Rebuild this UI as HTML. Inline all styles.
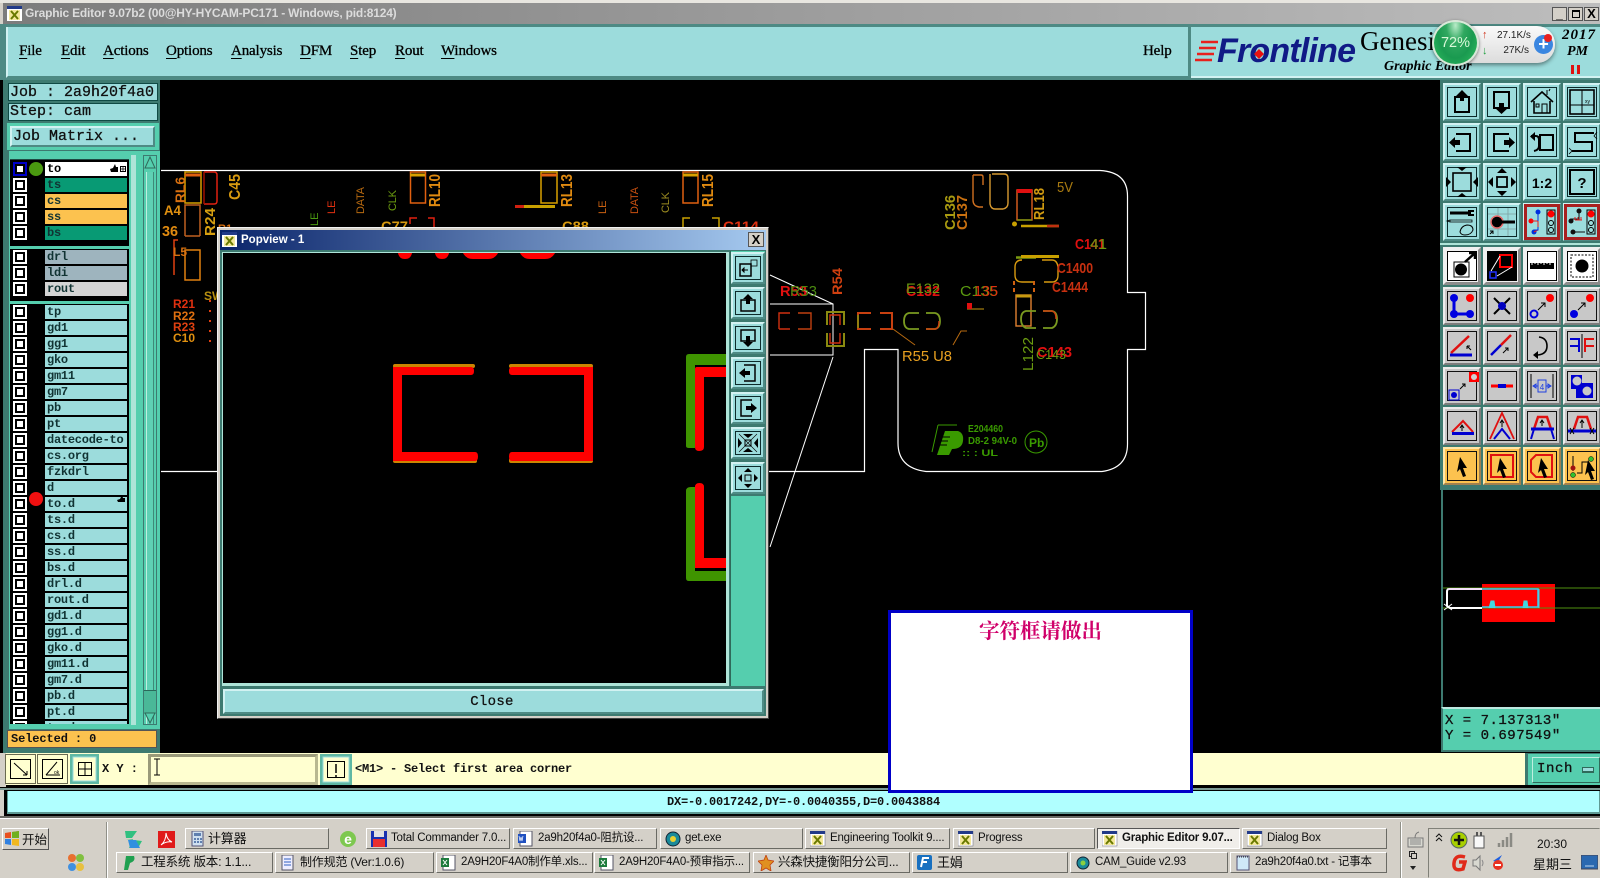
<!DOCTYPE html>
<html><head><meta charset="utf-8"><title>Graphic Editor</title>
<style>
html,body{margin:0;padding:0;width:1600px;height:878px;overflow:hidden;background:#d4d0c8;}
*{box-sizing:border-box}
.a{position:absolute}
body{font-family:"Liberation Sans","Noto Sans CJK SC",sans-serif;}
.m{font-family:"Liberation Mono","Noto Sans CJK SC",monospace;font-weight:bold;color:#111;white-space:pre}
.menu{position:absolute;top:41px;font:15px/20px "Liberation Serif",serif;color:#000;-webkit-text-stroke:.3px #000;letter-spacing:-.15px}
.menu u{text-underline-offset:3px}
.bev{background:#9cdcdc;border-style:solid;border-width:2px;border-color:#d2f2f2 #4e8a84 #4e8a84 #d2f2f2}
.row{position:relative;height:14px;margin-bottom:2px}
.row b{position:absolute;left:35px;top:0;width:82px;height:14px;background:#9cdcdc;font:bold 12px/14px "Liberation Mono",monospace;letter-spacing:-.25px;color:#133;padding-left:2px;white-space:pre;overflow:hidden}
.row i{position:absolute;left:5px;top:2px;width:10px;height:10px;background:#fff;border:2px solid #000;box-shadow:0 0 0 2px #fff}
.tk{position:absolute;height:21px;background:#d4d0c8;border:1px solid;border-color:#fff #6a6a64 #6a6a64 #fff;font:11.5px/19px "Liberation Sans","Noto Sans CJK SC",sans-serif;letter-spacing:-.2px;color:#111;white-space:nowrap;overflow:hidden;padding-left:24px}
.tk svg{position:absolute;left:4px;top:2px}
.t1{top:828px}.t2{top:852px}
.j{font-size:15px;line-height:17px;font-weight:normal;-webkit-text-stroke:.3px #111}
</style></head><body>

<!-- title bar -->
<div class="a" style="left:0;top:0;width:1600px;height:3px;background:#e8e6e0"></div>
<div class="a" style="left:3px;top:3px;width:1597px;height:21px;background:linear-gradient(90deg,#7c7c7c,#bdbdbd)"></div>
<svg class="a" style="left:7px;top:6px" width="15" height="15" viewBox="0 0 15 15"><rect width="15" height="15" fill="#fff"/><rect width="15" height="3" fill="#223a88"/><rect x="2" y="4" width="11" height="10" fill="#f4e89a"/><path d="M4 5l7 8M11 5l-7 8" stroke="#6a7a00" stroke-width="2"/></svg>
<div class="a" style="left:25px;top:5px;font:bold 12px/17px 'Liberation Sans',sans-serif;letter-spacing:-.2px;color:#dcdcdc;white-space:nowrap">Graphic Editor 9.07b2 (00@HY-HYCAM-PC171 - Windows, pid:8124)</div>
<div class="a" style="left:1552px;top:7px;width:15px;height:14px;background:#d4d0c8;border:1px solid #555;font:bold 12px/12px 'Liberation Sans';text-align:center;color:#000">_</div>
<div class="a" style="left:1568px;top:7px;width:15px;height:14px;background:#d4d0c8;border:1px solid #555"><div style="margin:2px 3px;width:8px;height:8px;border:1px solid #000;border-top-width:2px"></div></div>
<div class="a" style="left:1584px;top:7px;width:15px;height:14px;background:#d4d0c8;border:1px solid #555;font:bold 13px/12px 'Liberation Sans';text-align:center;color:#000">X</div>

<!-- menu bar -->
<div class="a" style="left:0;top:24px;width:1600px;height:56px;background:#4e8a84"></div>
<div class="a" style="left:6px;top:27px;width:1182px;height:51px;background:#9cdcdc;border-left:2px solid #d2f2f2;border-bottom:2px solid #4e8a84"></div>
<div class="a" style="left:1191px;top:27px;width:409px;height:51px;background:#9cdcdc;border-bottom:2px solid #d2f2f2"></div>
<div class="menu" style="left:19px"><u>F</u>ile</div>
<div class="menu" style="left:61px"><u>E</u>dit</div>
<div class="menu" style="left:103px"><u>A</u>ctions</div>
<div class="menu" style="left:166px"><u>O</u>ptions</div>
<div class="menu" style="left:231px"><u>A</u>nalysis</div>
<div class="menu" style="left:300px"><u>D</u>FM</div>
<div class="menu" style="left:350px"><u>S</u>tep</div>
<div class="menu" style="left:395px"><u>R</u>out</div>
<div class="menu" style="left:441px"><u>W</u>indows</div>
<div class="menu" style="left:1143px">Help</div>

<!-- logo -->
<svg class="a" style="left:1195px;top:38px" width="26" height="26"><g stroke="#e8201c" stroke-width="2.4"><path d="M6 4H23M4 10H21M2 16H19M0 22H17"/></g></svg>
<div class="a" style="left:1217px;top:33px;font:italic bold 34px/36px 'Liberation Sans',sans-serif;color:#101a86;letter-spacing:-.8px">Frontline</div>
<svg class="a" style="left:1253px;top:48px" width="12" height="12"><path d="M6 1L11 6L6 11L1 6Z" fill="#e81010"/></svg>
<div class="a" style="left:1360px;top:26px;font:27px/30px 'Liberation Serif',serif;color:#000;white-space:nowrap">Genesi</div>
<div class="a" style="left:1384px;top:58px;font:italic bold 14px/18px 'Liberation Serif',serif;color:#000;white-space:nowrap">Graphic Editor</div>
<div class="a" style="left:1562px;top:26px;font:italic bold 15px/18px 'Liberation Serif',serif;color:#000;letter-spacing:1px">2017</div>
<div class="a" style="left:1567px;top:44px;font:italic bold 14px/16px 'Liberation Serif',serif;color:#000">PM</div>
<div class="a" style="left:1571px;top:65px;width:3px;height:9px;background:#e01010"></div>
<div class="a" style="left:1577px;top:65px;width:3px;height:9px;background:#e01010"></div>

<!-- canvas -->
<div class="a" style="left:0;top:80px;width:1600px;height:673px;background:#000"></div>

<!-- PCB -->
<svg class="a" style="left:0;top:0" width="1600" height="878" font-family="Liberation Sans,sans-serif">
<path d="M161 170.5H1100Q1127.500 172 1127.500 196V292.500H1145.500V349.500H1127.500V444Q1127.500 468 1102 471.500H926Q898 468 898 443V349.500H864.500V471.500H161" fill="none" stroke="#fff" stroke-width="1.200"/>
<path d="M770 275L833 304V355H770M770 304H833M833 357L770 547" fill="none" stroke="#fff" stroke-width="1"/>
<!-- top-left components -->
<g fill="none" stroke-width="1.500">
<rect x="185" y="172" width="16" height="31" stroke="#d8a000"/><path d="M185 175H201" stroke="#e06010" stroke-width="3"/>
<path d="M204 172h10q3 0 3 3v26q0 3-3 3h-10" stroke="#e02010"/><path d="M204 172v32" stroke="#a01000"/>
<path d="M185 236V205H200V236M185 236H200" stroke="#c06020"/>
<rect x="185" y="250" width="15" height="30" stroke="#e08010"/>
<path d="M178 240H174V275" stroke="#e04010"/>
<rect x="410.500" y="172" width="15" height="31" stroke="#e06010"/><path d="M410 175H425" stroke="#d8a000" stroke-width="3"/>
<rect x="541" y="172" width="16" height="31" stroke="#d8a000"/><path d="M541 175H557" stroke="#e06010" stroke-width="3"/>
<rect x="683" y="172" width="15" height="31" stroke="#e06010"/><path d="M683 175H698" stroke="#d8a000" stroke-width="3"/>
<path d="M410 224v-6h7M428 218h6v9" stroke="#e02010"/>
<path d="M683 227v-9h7M712 218h7v9" stroke="#c8a000"/>
</g>
<path d="M515 206.500H555" stroke="#c8a000" stroke-width="3"/><path d="M515 206.500H524" stroke="#d02010" stroke-width="3"/>
<g font-size="12" font-weight="bold" fill="#e08a10">
<text transform="translate(185,203) rotate(-90)" textLength="26" lengthAdjust="spacingAndGlyphs" font-size="14" fill="#d87010">RL6</text>
<text transform="translate(240,200) rotate(-90)" textLength="26" lengthAdjust="spacingAndGlyphs" font-size="16" fill="#d89a10">C45</text>
<text transform="translate(440,207) rotate(-90)" textLength="33" lengthAdjust="spacingAndGlyphs" font-size="16">RL10</text>
<text transform="translate(572,207) rotate(-90)" textLength="33" lengthAdjust="spacingAndGlyphs" font-size="16">RL13</text>
<text transform="translate(713,207) rotate(-90)" textLength="33" lengthAdjust="spacingAndGlyphs" font-size="16">RL15</text>
<text transform="translate(215,236) rotate(-90)" textLength="28" lengthAdjust="spacingAndGlyphs" font-size="15" fill="#d8a010">R24</text>
<text x="164" y="215" textLength="17" lengthAdjust="spacingAndGlyphs" font-size="14" fill="#e09010">A4</text>
<text x="162" y="236" textLength="16" lengthAdjust="spacingAndGlyphs" font-size="15">36</text>
<text x="173" y="256" fill="#d87010" font-size="12">L5</text>
<text x="218" y="232" font-size="11" fill="#d87010">R1</text>
<text x="204" y="300" font-size="12" fill="#b89010">SW</text>
<text x="173" y="308" font-size="12" fill="#e03010">R21</text>
<text x="173" y="320" font-size="12" fill="#e07010">R22</text>
<text x="173" y="331" font-size="12" fill="#e04010">R23</text>
<text x="173" y="342" font-size="12" fill="#e09010">C10</text>
</g>
<path d="M210 300v46" stroke="#e04010" stroke-width="2" stroke-dasharray="2 8"/>
<g font-size="11">
<text transform="translate(335,214) rotate(-90)" fill="#e03010">LE</text>
<text transform="translate(364,214) rotate(-90)" fill="#b86a10" textLength="27">DATA</text>
<text transform="translate(396,211) rotate(-90)" fill="#6a9a10" textLength="21">CLK</text>
<text transform="translate(318,226) rotate(-90)" fill="#4a9a10">LE</text>
<text transform="translate(606,214) rotate(-90)" fill="#c86010">LE</text>
<text transform="translate(638,214) rotate(-90)" fill="#c85010" textLength="27">DATA</text>
<text transform="translate(669,213) rotate(-90)" fill="#9a8a20" textLength="21">CLK</text>
</g>
<g font-size="14" font-weight="bold">
<text x="381" y="231" fill="#d89a10" textLength="27" lengthAdjust="spacingAndGlyphs">C77</text>
<text x="562" y="231" fill="#d89a10" textLength="27" lengthAdjust="spacingAndGlyphs">C88</text>
<text x="723" y="231" fill="#e03010" textLength="36" lengthAdjust="spacingAndGlyphs">C114</text>
</g>
<!-- right components -->
<g fill="none" stroke-width="1.400">
<path d="M973 175h8q2 0 2 2v8M973 175v25q0 6 6 7h4" stroke="#d07020"/>
<path d="M992 174h12q4 0 4 4v25q0 5-5 6h-8q-4 0-5-5v-30" stroke="#d89a30"/>
<rect x="1017" y="190" width="15" height="30" stroke="#e06020"/><path d="M1017 191H1032" stroke="#e01010" stroke-width="4"/>
<path d="M1017 220H1032" stroke="#7a9a10"/>
<path d="M1016 258h20M1016 257h5" stroke="#7a9a10"/>
<path d="M1022 260q-7 0-7 7v8q0 7 7 7h12M1042 260h10q5 0 6 7v8q0 7-6 7h-8" stroke="#d89a10"/>
<rect x="1016" y="295" width="15" height="31" stroke="#e08030"/>
<path d="M1016 296H1031" stroke="#c89a10" stroke-width="3"/>
<path d="M779 329v-16h11M779 329h11" stroke="#d03010"/><path d="M798 313h13v16h-13" stroke="#c04010"/>
<path d="M827 325v-13h17v13" stroke="#8a8a10" stroke-width="2"/><path d="M830 325v-10h10v10" stroke="#d03010"/>
<path d="M827 333v13h17v-13" stroke="#8a8a10" stroke-width="2"/><path d="M830 333v10h10v-10" stroke="#d03010"/>
<path d="M871 313h-13v16h13M880 313h12v16h-12" stroke="#c84010" stroke-width="2"/><path d="M858 328v-13" stroke="#7a9a10"/>
<path d="M919 313h-10q-5 1-5 8t5 8h10M926 313h9q5 1 5 8t-5 8h-9" stroke="#7a9a20" stroke-width="1.800"/><path d="M926 329h9q4 0 4-8" stroke="#d04010"/>
<path d="M1036 311h-10q-5 1-5 8t5 9h10M1043 311h9q5 1 5 8t-5 9h-9" stroke="#7a9a20" stroke-width="1.800"/><path d="M1043 311h9q4 1 4 8" stroke="#d04010"/>
<path d="M893 329L915 345M967 331h-6L953 345" stroke="#b86a10" stroke-width="1"/>
</g>
<path d="M1021 226h38" stroke="#c8a000" stroke-width="2.500"/><path d="M1047 226h12" stroke="#c03010" stroke-width="2.500"/><circle cx="1014.500" cy="224" r="2.500" fill="#c8a000"/>
<path d="M1021 256.500h38" stroke="#c8a000" stroke-width="3"/>
<path d="M967 309h17" stroke="#c89a10" stroke-width="1"/><rect x="967" y="303" width="5" height="6" fill="#e01010"/>
<path d="M1014 281v4M1014 288v4M1034 281v4M1034 288v4" stroke="#d06010" stroke-width="2"/>
<g font-weight="bold">
<text x="780" y="296" font-size="15" fill="#e01010" textLength="27" lengthAdjust="spacingAndGlyphs">R53</text>
<text x="790" y="296" font-size="15" fill="#4a8a10" font-weight="normal" textLength="27" lengthAdjust="spacingAndGlyphs">R53</text>
<text transform="translate(842,295) rotate(-90)" font-size="14" fill="#d04010" textLength="27" lengthAdjust="spacingAndGlyphs">R54</text>
<text x="906" y="296" font-size="15" fill="#e01010" textLength="34" lengthAdjust="spacingAndGlyphs">C132</text>
<text x="906" y="293" font-size="14" fill="#6a9a10" font-weight="normal" textLength="34" lengthAdjust="spacingAndGlyphs">E132</text>
<text x="960" y="296" font-size="15" fill="#5a9a10" textLength="38" lengthAdjust="spacingAndGlyphs" font-weight="normal">C135</text>
<text x="974" y="296" font-size="15" fill="#e03010" textLength="24" lengthAdjust="spacingAndGlyphs" font-weight="normal">135</text>
<text x="902" y="361" font-size="15" fill="#e8a020" font-weight="normal" textLength="50" lengthAdjust="spacingAndGlyphs">R55 U8</text>
<text x="1075" y="249" font-size="15" fill="#e01010" textLength="30" lengthAdjust="spacingAndGlyphs">C141</text>
<text x="1090" y="249" font-size="15" fill="#6a9a10" font-weight="normal" textLength="17" lengthAdjust="spacingAndGlyphs">41</text>
<text x="1057" y="273" font-size="15" fill="#c83010" textLength="36" lengthAdjust="spacingAndGlyphs">C1400</text>
<text x="1052" y="292" font-size="15" fill="#c83010" textLength="36" lengthAdjust="spacingAndGlyphs">C1444</text>
<text x="1037" y="357" font-size="15" fill="#e01010" textLength="35" lengthAdjust="spacingAndGlyphs">C143</text>
<text x="1036" y="359" font-size="13" fill="#6a9a10" font-weight="normal" textLength="30" lengthAdjust="spacingAndGlyphs">C143</text>
<text transform="translate(1033,371) rotate(-90)" font-size="15" fill="#6a9a10" font-weight="normal" textLength="34" lengthAdjust="spacingAndGlyphs">L122</text>
<text transform="translate(955,230) rotate(-90)" font-size="15" fill="#a89a10" textLength="35" lengthAdjust="spacingAndGlyphs">C136</text>
<text transform="translate(967,230) rotate(-90)" font-size="15" fill="#c87010" textLength="35" lengthAdjust="spacingAndGlyphs">C137</text>
<text x="1057" y="192" font-size="15" fill="#a87a10" font-weight="normal" textLength="16" lengthAdjust="spacingAndGlyphs">5V</text>
<text transform="translate(1044,220) rotate(-90)" font-size="15" fill="#d09a10" textLength="32" lengthAdjust="spacingAndGlyphs">RL18</text>
</g>
<!-- UL mark -->
<g fill="#3a9a00">
<path d="M945 431H958Q964 433 963 441Q962 449 952 449L949 455H937Z"/>
<path d="M938 425H957M938 425L932 452" stroke="#3a9a00" fill="none"/>
<path d="M936 437H950M935 441H948M934 445H947" stroke="#000"/>
<text x="968" y="432" font-size="10" font-weight="bold" textLength="35" lengthAdjust="spacingAndGlyphs">E204460</text>
<text x="968" y="444" font-size="10" font-weight="bold" textLength="49" lengthAdjust="spacingAndGlyphs">D8-2 94V-0</text>
<text x="962" y="456" font-size="9" font-weight="bold" textLength="36" lengthAdjust="spacingAndGlyphs">:: : UL</text>
</g>
<circle cx="1036" cy="442" r="11" fill="none" stroke="#3a9a00"/>
<text x="1029" y="447" font-size="12" font-weight="bold" fill="#3a9a00">Pb</text>
</svg>

<!-- minimap -->
<div class="a" style="left:1482px;top:584px;width:73px;height:38px;background:#f00"></div>
<svg class="a" style="left:1440px;top:580px" width="160" height="40">
<path d="M2 8H160M2 28H160M2 8V28" stroke="#4f8f10" fill="none"/>
<path d="M42 9H9Q7 9 7 12V26L10 28H42" stroke="#fff" fill="none" stroke-width="2"/>
<path d="M8 9H42" stroke="#e8c0f0"/>
<path d="M42 9H98V27H42" stroke="#40c8f0" fill="none" stroke-width="1.500"/>
<path d="M99 9V28M49 28l2-7h3l1 7M83 28l1-7h3l1 7" stroke="#40d8e0" fill="#40d8e0"/>
<path d="M4 30l8-6M4 24l8 6" stroke="#fff"/>
</svg>
<div class="a" style="left:1441px;top:490px;width:2px;height:218px;background:#3d7a70"></div>
<div class="a" style="left:1441px;top:707px;width:159px;height:45px;background:#55ceae;border-top:2px solid #bfe8e0;border-left:2px solid #3d7a70;border-bottom:2px solid #3d7a70"></div>
<div class="a m" style="left:1445px;top:714px;font-size:14px;line-height:15px;letter-spacing:.5px;font-weight:normal;-webkit-text-stroke:.3px #111">X = 7.137313"
Y = 0.697549"</div>

<!-- left panel -->
<div class="a" style="left:3px;top:80px;width:157px;height:673px;background:#3d7a70"></div>
<div class="a" style="left:8px;top:83px;width:150px;height:18px;background:#9cdcdc;border:1px solid #0f4a44"></div>
<div class="a m j" style="left:10px;top:84px">Job : 2a9h20f4a0</div>
<div class="a" style="left:8px;top:103px;width:150px;height:18px;background:#9cdcdc;border:1px solid #0f4a44"></div>
<div class="a m j" style="left:10px;top:103px">Step: cam</div>
<div class="a" style="left:7px;top:123px;width:152px;height:27px;background:#55ceae"></div>
<div class="a bev m j" style="left:10px;top:126px;width:145px;height:21px;padding-left:1px">Job Matrix ...</div>
<div class="a" style="left:5px;top:151px;width:155px;height:578px;background:#55ceae"></div>
<div class="a" style="left:10px;top:159px;width:119px;height:565px;background:#000;border-top:1px solid #204a44"></div>
<div class="a" style="left:5px;top:151px;width:4px;height:578px;background:#3d7a70"></div>
<div class="a" style="left:131px;top:155px;width:5px;height:570px;background:#aee4d8"></div>
<div class="a" style="left:143px;top:155px;width:14px;height:570px;background:#55ceae;border:1px solid #3d7a70"></div>
<div class="a" style="left:146px;top:172px;width:8px;height:552px;background:#5fd0b4;border-left:1px solid #bfeee0;border-right:1px solid #3d8a78"></div>
<div class="a" style="left:144px;top:690px;width:12px;height:24px;background:#4ab898;border-top:1px solid #2a6a5a"></div>
<svg class="a" style="left:143px;top:155px" width="14" height="16"><path d="M7 2L12 13H2Z" fill="#55ceae" stroke="#2f6a5a"/></svg>
<svg class="a" style="left:143px;top:712px" width="14" height="13"><path d="M7 11L12 1H2Z" fill="#55ceae" stroke="#2f6a5a"/></svg>

<div class="a" style="left:10px;top:162px;width:119px;height:562px;overflow:hidden">
<div class="row"><i style="box-shadow:0 0 0 2px #0000c8"></i><b style="background:#fff;color:#000">to</b></div>
<div class="row"><i></i><b style="background:#089a74">ts</b></div>
<div class="row"><i></i><b style="background:#fcc24f">cs</b></div>
<div class="row"><i></i><b style="background:#fcc24f">ss</b></div>
<div class="row"><i></i><b style="background:#089a74">bs</b></div>
<div style="height:5px"></div>
<div style="position:relative;height:3px;background:#55ceae;margin:-1px 0 1px"></div>
<div class="row"><i></i><b style="background:#9eb4be">drl</b></div>
<div class="row"><i></i><b style="background:#9eb4be">ldi</b></div>
<div class="row"><i></i><b style="background:#d4d4d4">rout</b></div>
<div style="height:5px"></div>
<div style="position:relative;height:3px;background:#55ceae;margin:-2px 0 1px"></div>
<div class="row"><i></i><b>tp</b></div>
<div class="row"><i></i><b>gd1</b></div>
<div class="row"><i></i><b>gg1</b></div>
<div class="row"><i></i><b>gko</b></div>
<div class="row"><i></i><b>gm11</b></div>
<div class="row"><i></i><b>gm7</b></div>
<div class="row"><i></i><b>pb</b></div>
<div class="row"><i></i><b>pt</b></div>
<div class="row"><i></i><b>datecode-to</b></div>
<div class="row"><i></i><b>cs.org</b></div>
<div class="row"><i></i><b>fzkdrl</b></div>
<div class="row"><i></i><b>d</b></div>
<div class="row"><i></i><b>to.d</b></div>
<div class="row"><i></i><b>ts.d</b></div>
<div class="row"><i></i><b>cs.d</b></div>
<div class="row"><i></i><b>ss.d</b></div>
<div class="row"><i></i><b>bs.d</b></div>
<div class="row"><i></i><b>drl.d</b></div>
<div class="row"><i></i><b>rout.d</b></div>
<div class="row"><i></i><b>gd1.d</b></div>
<div class="row"><i></i><b>gg1.d</b></div>
<div class="row"><i></i><b>gko.d</b></div>
<div class="row"><i></i><b>gm11.d</b></div>
<div class="row"><i></i><b>gm7.d</b></div>
<div class="row"><i></i><b>pb.d</b></div>
<div class="row"><i></i><b>pt.d</b></div>
<div class="row"><i></i><b>to.d</b></div>
</div>
<div class="a" style="left:29px;top:162px;width:14px;height:14px;border-radius:50%;background:#4a9a10"></div>
<div class="a" style="left:29px;top:492px;width:14px;height:14px;border-radius:50%;background:#f01010"></div>
<svg class="a" style="left:108px;top:163px" width="20" height="12"><path d="M2 6l3-1 2-4 1 3h2v5H3z" fill="#000"/><rect x="12.500" y="3.500" width="5" height="5" fill="none" stroke="#000"/><path d="M15 3v6M12 6h6" stroke="#000" stroke-width=".7"/></svg>
<svg class="a" style="left:115px;top:493px" width="12" height="12"><path d="M2 7l3-1 2-4 1 3h2v4H3z" fill="#000"/></svg>
<div class="a m" style="left:7px;top:730px;width:150px;height:18px;background:#fcc24f;border:1px solid #555;font-size:12px;line-height:16px;padding-left:3px;letter-spacing:-.1px">Selected : 0</div>

<!-- right toolbar -->
<div class="a" style="left:1440px;top:80px;width:160px;height:163px;background:#3d7a70"></div>
<div class="a" style="left:1440px;top:243px;width:160px;height:2px;background:#aee4d8"></div>
<div class="a" style="left:1440px;top:245px;width:160px;height:245px;background:#3d7a70"></div>
<svg class="a" style="left:1440px;top:80px" width="160" height="410" font-family="Liberation Sans,sans-serif">
<defs>
<g id="fT"><rect width="38" height="38" fill="#9cdcdc"/><path d="M0 38V0H38L36 2H2V36Z" fill="#d2f2f2"/><path d="M38 0V38H0L2 36H36V2Z" fill="#4e8a84"/><rect x="4.500" y="4.500" width="29" height="29" fill="none" stroke="#0c2a2a"/></g>
<g id="fW"><rect width="38" height="38" fill="#f0f0f0"/><path d="M38 0V38H0L3 35H35V3Z" fill="#8c8c8c"/><rect x="4.500" y="4.500" width="29" height="29" fill="#fff" stroke="#000"/></g>
<g id="fG"><rect width="38" height="38" fill="#c8c8c8"/><path d="M0 38V0H38L36 2H2V36Z" fill="#ececec"/><path d="M38 0V38H0L2 36H36V2Z" fill="#7c7c7c"/><rect x="4.500" y="4.500" width="29" height="29" fill="none" stroke="#111"/></g>
<g id="fO"><rect width="38" height="38" fill="#fcc24f"/><path d="M0 38V0H38L36 2H2V36Z" fill="#ffe6a8"/><path d="M38 0V38H0L2 36H36V2Z" fill="#a08050"/><rect x="4.500" y="4.500" width="29" height="29" fill="none" stroke="#111"/></g>
<g id="fR"><rect width="38" height="38" fill="#9cdcdc"/><path d="M0 38V0H38L36 2H2V36Z" fill="#d2f2f2"/><path d="M38 0V38H0L2 36H36V2Z" fill="#4e8a84"/><rect x="2.500" y="2.500" width="33" height="33" fill="none" stroke="#a82020" stroke-width="3"/></g>
<g id="ar"><path d="M5 3L12 14L8 14L11 22L8 23L5 15L2 18Z" fill="#000"/></g>
</defs>
<g transform="translate(3,3)"><use href="#fT"/><rect x="12" y="14" width="14" height="15" fill="none" stroke="#000" stroke-width="2"/><path d="M19 7L25 13H21V18H17V13H13Z" fill="#000"/></g>
<g transform="translate(43,3)"><use href="#fT"/><rect x="11" y="9" width="15" height="16" fill="none" stroke="#000" stroke-width="2"/><path d="M18.500 31L12 25H16V20H21V25H25Z" fill="#000"/></g>
<g transform="translate(83,3)"><use href="#fT"/><path d="M8 19L19 9L30 19M11 18V30H27V18" fill="none" stroke="#000" stroke-width="1.600"/><rect x="13" y="21" width="3" height="3" fill="none" stroke="#000"/><rect x="19" y="21" width="5" height="9" fill="none" stroke="#000"/><path d="M24 12V7M26 8l1-2" stroke="#000"/></g>
<g transform="translate(123,3)"><use href="#fT"/><rect x="7" y="7" width="24" height="24" fill="none" stroke="#000" stroke-width="1.600"/><path d="M19 7V31M7 22H31" stroke="#000"/><text x="22" y="20" font-size="5">xy</text></g>
<g transform="translate(3,43)"><use href="#fT"/><path d="M13 11H27V28H13" fill="none" stroke="#000" stroke-width="2"/><path d="M6 19.500L12 14V17H17V22H12V25Z" fill="#000"/></g>
<g transform="translate(43,43)"><use href="#fT"/><path d="M26 11H11V28H26" fill="none" stroke="#000" stroke-width="2"/><path d="M32 19.500L26 14V17H21V22H26V25Z" fill="#000"/></g>
<g transform="translate(83,43)"><use href="#fT"/><rect x="17" y="12" width="13" height="15" fill="none" stroke="#000" stroke-width="2"/><path d="M8 13h5q3 0 3 4v6q0 4-5 5" fill="none" stroke="#000" stroke-width="2"/><path d="M12 9L7 13.500L12 18Z" fill="#000"/></g>
<g transform="translate(123,43)"><use href="#fT"/><path d="M31 10H12V19H29V28H9" fill="none" stroke="#000" stroke-width="2"/><path d="M34 9l-3 4 3 3M6 25l3 3-3 3" fill="none" stroke="#000" stroke-width=".8"/></g>
<g transform="translate(3,83)"><use href="#fT"/><rect x="10" y="10" width="18" height="18" fill="none" stroke="#000" stroke-width="1.600"/><path d="M14 4h10l-5 4zM14 34h10l-5-4zM3 14v10l5-5zM35 14v10l-5-5z" fill="#000"/></g>
<g transform="translate(43,83)"><use href="#fT"/><rect x="14" y="14" width="10" height="10" fill="none" stroke="#000" stroke-width="1.800"/><path d="M14 10h10l-5-5zM14 28h10l-5 5zM10 14v10l-5-5zM28 14v10l5-5z" fill="#000"/></g>
<g transform="translate(83,83)"><use href="#fT"/><text x="19" y="25" text-anchor="middle" font-size="14" font-weight="bold" fill="#000">1:2</text></g>
<g transform="translate(123,83)"><use href="#fT"/><rect x="7" y="7" width="24" height="24" fill="none" stroke="#000" stroke-width="2"/><text x="19" y="25" text-anchor="middle" font-size="15" font-weight="bold" fill="#000">?</text></g>
<g transform="translate(3,123)"><use href="#fT"/><path d="M7 10H27" stroke="#000" stroke-width="3"/><path d="M25 7h6v2h-3v2h3v2h-6z" fill="#000"/><path d="M7 17h22v2H7zM7 17l-3 1 3 1" fill="none" stroke="#000" stroke-width=".8"/><path d="M17 29q1-6 7-7 6 0 6 5-2 5-8 5-4 0-5-3z" fill="none" stroke="#000"/></g>
<g transform="translate(43,123)"><use href="#fT"/><path d="M15 5V33M25 5V33M5 11H33M5 26H33" stroke="#7c9f9f" stroke-width=".8"/><circle cx="14" cy="19" r="6" fill="#000" stroke="#e86a6a" stroke-width="1.500"/><path d="M19 17.500H32V20.500H19Z" fill="#000"/><path d="M7 31l3-3M7 28h3v3" stroke="#000" fill="none"/></g>
<g transform="translate(83,123)"><use href="#fR"/><rect x="24" y="7" width="8" height="24" fill="none" stroke="#000"/><circle cx="28" cy="11" r="3.500" fill="#f00"/><circle cx="28" cy="20" r="2.500" fill="none" stroke="#000"/><circle cx="28" cy="27" r="2.500" fill="none" stroke="#000"/><circle cx="15" cy="9" r="2.500" fill="#0030e0"/><circle cx="8" cy="18" r="2.500" fill="#f00"/><circle cx="11" cy="29" r="2.500" fill="#0030e0"/><path d="M15 9V18H8M15 18V27L11 29" fill="none" stroke="#e02020"/><path d="M15 9V18M15 24V27H11" fill="none" stroke="#0030e0"/></g>
<g transform="translate(123,123)"><use href="#fR"/><rect x="24" y="7" width="8" height="24" fill="none" stroke="#000"/><circle cx="28" cy="11" r="3.500" fill="#f00"/><circle cx="28" cy="20" r="2.500" fill="none" stroke="#000"/><circle cx="28" cy="27" r="2.500" fill="none" stroke="#000"/><circle cx="16" cy="8" r="2.500" fill="#111"/><circle cx="8" cy="18" r="2.500" fill="#111"/><circle cx="10" cy="29" r="2.500" fill="#111"/><path d="M16 8V16H8V18M10 29H22" fill="none" stroke="#111"/><path d="M12 17h7M12 14v3M15 14v3M18 14v3" stroke="#e02020"/></g>
<g transform="translate(3,167)"><use href="#fW"/><rect x="11" y="15" width="15" height="15" fill="none" stroke="#000"/><circle cx="18" cy="22.500" r="6" fill="#000"/><path d="M22 15L32 6M26 6H32V12" fill="none" stroke="#000" stroke-width="2.500"/></g>
<g transform="translate(43,167)"><use href="#fW"/><rect x="5" y="5" width="28" height="28" fill="#000"/><rect x="17" y="8" width="12" height="12" fill="none" stroke="#f00" stroke-width="2"/><rect x="7" y="25" width="6" height="6" fill="none" stroke="#2030ff" stroke-width="1.500"/><path d="M8 24L17 9M14 29L29 20" stroke="#fff"/></g>
<g transform="translate(83,167)"><use href="#fW"/><path d="M7 16H31V22H7Z" fill="#000"/><path d="M9 15v3M12 15v2M15 15v3M18 15v2M21 15v3M24 15v2M27 15v3" stroke="#fff"/></g>
<g transform="translate(123,167)"><use href="#fW"/><rect x="8" y="8" width="22" height="22" fill="none" stroke="#000" stroke-dasharray="2 1.500"/><circle cx="19" cy="19" r="6.500" fill="#000"/></g>
<g transform="translate(3,207)"><use href="#fG"/><circle cx="11" cy="11" r="4" fill="#0000e0"/><circle cx="27" cy="11" r="4" fill="#f00"/><circle cx="11" cy="27" r="4" fill="#0000e0"/><circle cx="27" cy="27" r="4" fill="#0000e0"/><path d="M11 11V27H27" stroke="#0000e0" stroke-width="3" fill="none"/></g>
<g transform="translate(43,207)"><use href="#fG"/><path d="M11 11L27 27M27 11L11 27" stroke="#000" stroke-width="2"/><circle cx="19" cy="19" r="4" fill="#0000c0"/></g>
<g transform="translate(83,207)"><use href="#fG"/><circle cx="27" cy="11" r="4" fill="#f00"/><circle cx="11" cy="27" r="3.500" fill="none" stroke="#0000e0" stroke-width="2"/><path d="M15 23L22 16M18 16h4v4" fill="none" stroke="#000"/></g>
<g transform="translate(123,207)"><use href="#fG"/><circle cx="27" cy="11" r="4" fill="#f00"/><circle cx="11" cy="27" r="4" fill="#0000e0"/><path d="M15 23L22 16M18 16h4v4" fill="none" stroke="#000"/></g>
<g transform="translate(3,247)"><use href="#fG"/><path d="M8 26L26 9" stroke="#e01010" stroke-width="2.500"/><path d="M7 28H29" stroke="#0000d0" stroke-width="3"/><path d="M24 19l4 4M24 19h3M24 19v3" stroke="#000" fill="none"/></g>
<g transform="translate(43,247)"><use href="#fG"/><path d="M8 28L18 18" stroke="#0000d0" stroke-width="2.500"/><path d="M18 18L28 8" stroke="#e01010" stroke-width="2.500"/><path d="M20 26L25 21M22 21h3v3" stroke="#000" fill="none"/></g>
<g transform="translate(83,247)"><use href="#fG"/><path d="M16 10q8 1 8 9t-9 9" fill="none" stroke="#000" stroke-width="1.600"/><path d="M15 24v8l-5-4z" fill="#000"/></g>
<g transform="translate(123,247)"><use href="#fG"/><path d="M19 7V31" stroke="#000"/><path d="M7 12H16V25M7 19H15" stroke="#0000d0" stroke-width="2" fill="none"/><path d="M31 12H22V25M31 19H23" stroke="#e01010" stroke-width="2" fill="none"/></g>
<g transform="translate(3,287)"><use href="#fG"/><rect x="26" y="5" width="10" height="10" fill="#f00"/><circle cx="31" cy="10" r="3" fill="#d0d0d0"/><rect x="6" y="23" width="10" height="10" fill="none" stroke="#0000d0"/><circle cx="11" cy="28" r="3" fill="#0000d0"/><path d="M17 22L22 17M19 17h3v3" stroke="#000" fill="none"/></g>
<g transform="translate(43,287)"><use href="#fG"/><path d="M8 19H30" stroke="#f00" stroke-width="3"/><rect x="15" y="17" width="8" height="4" fill="#0000d0"/></g>
<g transform="translate(83,287)"><use href="#fG"/><path d="M8 7V31M30 7V31" stroke="#000"/><path d="M10 19H28M10 19l3-2v4zM28 19l-3-2v4z" stroke="#2040e0" fill="none"/><rect x="15" y="13" width="8" height="12" fill="#c8c8c8" stroke="#2040e0"/><text x="19" y="23" text-anchor="middle" font-size="8" fill="#2040e0">4</text></g>
<g transform="translate(123,287)"><use href="#fG"/><path d="M8 8H19V16H30V31H13V22H8Z" fill="#0000d0"/><circle cx="14" cy="14" r="4.500" fill="#c8c8c8"/><circle cx="24" cy="24" r="4.500" fill="#c8c8c8"/></g>
<g transform="translate(3,327)"><use href="#fG"/><path d="M9 25L20 14L30 25" fill="none" stroke="#e01010" stroke-width="2"/><path d="M9 26.500H31" stroke="#0000d0" stroke-width="3"/><path d="M19 24V19M17 21l2-3 2 3" stroke="#000" fill="none"/></g>
<g transform="translate(43,327)"><use href="#fG"/><path d="M7 32L19 6L31 32" fill="none" stroke="#e01010" stroke-width="1.800"/><path d="M11 32L19 22L27 32" fill="none" stroke="#0000d0" stroke-width="2"/><path d="M19 20V14M17 16l2-3 2 3" stroke="#000" fill="none"/></g>
<g transform="translate(83,327)"><use href="#fG"/><path d="M11 22L15 10H24L28 22" fill="none" stroke="#e01010" stroke-width="2.500"/><path d="M8 32L11 22H28L31 32" fill="none" stroke="#0000d0" stroke-width="2"/><path d="M8 22H31" stroke="#0000d0" stroke-width="3"/><path d="M19 19V14M17 16l2-3 2 3" stroke="#000" fill="none"/></g>
<g transform="translate(123,327)"><use href="#fG"/><path d="M11 22L15 10H24L28 22" fill="none" stroke="#e01010" stroke-width="2.500"/><path d="M5 24H33" stroke="#0000d0" stroke-width="3"/><path d="M7 21l4 6M11 21l-4 6M27 21l4 6M31 21l-4 6" stroke="#000"/><path d="M19 21V14M17 16l2-3 2 3" stroke="#000" fill="none"/></g>
<g transform="translate(3,367)"><use href="#fO"/><use href="#ar" x="12" y="7"/></g>
<g transform="translate(43,367)"><use href="#fO"/><rect x="8" y="8" width="22" height="22" fill="none" stroke="#e01010" stroke-width="2"/><use href="#ar" x="12" y="8"/></g>
<g transform="translate(83,367)"><use href="#fO"/><path d="M13 8H29V30H13L8 25V13Z" fill="none" stroke="#e01010" stroke-width="2"/><use href="#ar" x="13" y="8"/></g>
<g transform="translate(123,367)"><use href="#fO"/><path d="M10 9V24M14 26H19V15H26" stroke="#000" fill="none"/><circle cx="10" cy="21" r="2.500" fill="#a01010"/><circle cx="28" cy="12" r="2.500" fill="#30c030" stroke="#000" stroke-width=".5"/><circle cx="10" cy="28" r="2.500" fill="#30c030" stroke="#000" stroke-width=".5"/><use href="#ar" x="20" y="10"/></g>
</svg>

<!-- Popup -->
<div class="a" style="left:217px;top:227px;width:552px;height:492px;background:#d4d0c8;border:1px solid;border-color:#f0f0f0 #404040 #404040 #f0f0f0"></div>
<div class="a" style="left:220px;top:230px;width:546px;height:20px;background:linear-gradient(90deg,#0a246a,#a6caf0)"></div>
<svg class="a" style="left:222px;top:232px" width="15" height="15" viewBox="0 0 15 15"><rect width="15" height="15" fill="#fff"/><rect width="15" height="3" fill="#223a88"/><rect x="2" y="4" width="11" height="10" fill="#f4e89a"/><path d="M4 5l7 8M11 5l-7 8" stroke="#6a7a00" stroke-width="2"/></svg>
<div class="a" style="left:241px;top:231px;font:bold 11.500px/18px 'Liberation Sans',sans-serif;color:#fff;white-space:nowrap">Popview - 1</div>
<div class="a" style="left:748px;top:232px;width:16px;height:15px;background:#d4d0c8;border:1px solid #555;font:bold 13px/13px 'Liberation Sans';text-align:center;color:#000">X</div>
<div class="a" style="left:220px;top:250px;width:546px;height:466px;background:#3d7a70"></div>
<div class="a" style="left:222px;top:252px;width:507px;height:434px;background:#aee4d8"></div>
<div class="a" style="left:223px;top:253px;width:503px;height:430px;background:#000;overflow:hidden"></div>
<svg class="a" style="left:223px;top:253px" width="503" height="430">
<g fill="#f00"><path d="M175 0h14q-1 6-7 6t-7-6zM212 0h14q-1 6-7 6t-7-6zM240 0h35q-3 6-10 6h-15q-7 0-10-6zM297 0h35q-3 6-10 6h-15q-7 0-10-6z"/></g>
<g fill="#cc8400"><rect x="170" y="111" width="82" height="4" rx="2"/><rect x="286" y="111" width="84" height="4" rx="2"/><rect x="170" y="205" width="84" height="5" rx="2"/><rect x="286" y="205" width="84" height="5" rx="2"/></g>
<path d="M170 114H248Q251 114 251 118Q251 122 248 122H179V199H252Q255 199 255 203.500Q255 208 252 208H170Z" fill="#f00"/>
<path d="M370 114H289Q286 114 286 118Q286 122 289 122H361V199H289Q286 199 286 203.500Q286 208 289 208H370Z" fill="#f00"/>
<path d="M503 101H466Q463 101 463 104V193Q463 195 466 195H472V112H503Z" fill="#3f9400"/>
<path d="M503 114H474Q472 114 472 116V194Q472 198 476 198Q481 198 481 194V124H503Z" fill="#f00"/>
<path d="M463 238Q463 234 468 234H472V318H503V328H466Q463 328 463 325Z" fill="#3f9400"/>
<path d="M472 234Q472 230 476.500 230Q481 230 481 234V305H503V315H472Z" fill="#f00"/>
</svg>
<div class="a" style="left:730px;top:251px;width:35px;height:435px;background:#55ceae;border-left:1px solid #2f6a5a"></div>
<svg class="a" style="left:731px;top:252px" width="34" height="245">
<defs><g id="pf"><rect width="34" height="32" fill="#9cdcdc"/><path d="M0 32V0H34L32 2H2V30Z" fill="#d2f2f2"/><path d="M34 0V32H0L2 30H32V2Z" fill="#4e8a84"/><rect x="4.500" y="4.500" width="25" height="23" fill="none" stroke="#0c2a2a"/></g></defs>
<g><rect y="-1" width="34" height="245" fill="#3d7a70"/></g>
<g><use href="#pf"/><rect x="9" y="12" width="11" height="12" fill="none" stroke="#000" stroke-width="1.500"/><rect x="20" y="8" width="6" height="6" fill="none" stroke="#000" stroke-width=".8"/><path d="M11 18h6M11 18l2-2v4z" stroke="#000" fill="none"/></g>
<g transform="translate(0,35)"><use href="#pf"/><rect x="10" y="13" width="14" height="11" fill="none" stroke="#000" stroke-width="1.500"/><path d="M17 7L22 12H19V17H15V12H12Z" fill="#000"/></g>
<g transform="translate(0,70)"><use href="#pf"/><rect x="10" y="8" width="14" height="11" fill="none" stroke="#000" stroke-width="1.500"/><path d="M17 25L22 20H19V14H15V20H12Z" fill="#000"/></g>
<g transform="translate(0,105)"><use href="#pf"/><path d="M13 8H24V24H13" fill="none" stroke="#000" stroke-width="1.500"/><path d="M8 16L14 11V14H19V18H14V21Z" fill="#000"/></g>
<g transform="translate(0,140)"><use href="#pf"/><path d="M21 8H10V24H21" fill="none" stroke="#000" stroke-width="1.500"/><path d="M26 16L20 11V14H15V18H20V21Z" fill="#000"/></g>
<g transform="translate(0,175)"><use href="#pf"/><rect x="14" y="13" width="6" height="6" fill="none" stroke="#000"/><path d="M12 7h10l-5 4zM12 25h10l-5-4zM7 11v10l4-5zM27 11v10l-4-5z" fill="#000"/><path d="M8 7l18 18M26 7L8 25" stroke="#000" stroke-width=".6"/></g>
<g transform="translate(0,210)"><use href="#pf"/><rect x="14" y="13" width="6" height="6" fill="none" stroke="#000"/><path d="M13 10h8l-4-4zM13 22h8l-4 4zM11 12v8l-4-4zM23 12v8l4-4z" fill="#000"/></g>
</svg>
<div class="a" style="left:221px;top:686px;width:544px;height:3px;background:#3d7a70"></div>
<div class="a bev m" style="left:223px;top:689px;width:541px;height:25px;text-align:center;font-size:14px;line-height:23px;font-weight:normal;-webkit-text-stroke:.3px #111;letter-spacing:.3px;padding-right:3px">Close</div>

<!-- bottom command row -->
<div class="a" style="left:0;top:753px;width:1600px;height:34px;background:#ffffd0"></div>
<div class="a" style="left:0;top:785px;width:1600px;height:3px;background:#000"></div>
<div class="a" style="left:0;top:788px;width:1600px;height:2px;background:#7c9a94"></div>
<div class="a" style="left:0;top:753px;width:6px;height:34px;background:#d4d0c8"></div>
<svg class="a" style="left:5px;top:754px" width="95" height="31">
<rect x=".5" y=".5" width="30" height="29" fill="#ffffd0" stroke="#6a6a50"/><rect x="5.500" y="5.500" width="20" height="19" fill="none" stroke="#000"/><path d="M9 9L22 21M22 21h-4M22 21v-4" stroke="#000" fill="none"/>
<rect x="32.500" y=".5" width="30" height="29" fill="#ffffd0" stroke="#6a6a50"/><rect x="37.500" y="5.500" width="20" height="19" fill="none" stroke="#000"/><path d="M41 21H55M41 21L52 8" stroke="#000" fill="none"/><text x="49" y="20" font-size="5" font-family="Liberation Sans">ok</text>
<rect x="65" y="0" width="29" height="30" fill="#5fb8a4"/><rect x="68" y="3" width="23" height="24" fill="#ffffd0" stroke="#9cdcdc"/><rect x="73.500" y="8.500" width="13" height="13" fill="none" stroke="#000"/><path d="M80 8V22M73 15H87" stroke="#000"/>
</svg>
<div class="a m" style="left:102px;top:761px;font-size:12px;line-height:16px">X Y :</div>
<div class="a" style="left:148px;top:754px;width:170px;height:31px;background:#ffffd0;border:3px solid #b8b890;border-top-color:#9a9a7a;border-left-color:#9a9a7a"></div>
<svg class="a" style="left:153px;top:758px" width="8" height="18"><path d="M1 1h6M4 1V17M1 17h6" stroke="#000" fill="none"/></svg>
<svg class="a" style="left:320px;top:754px" width="32" height="31"><rect width="32" height="31" fill="#5fb8a4"/><rect x="3" y="3" width="26" height="25" fill="#ffffd0" stroke="#9cdcdc"/><rect x="7.500" y="7.500" width="17" height="16" fill="none" stroke="#000"/><path d="M16 10V19M16 21v2" stroke="#000" stroke-width="1.500"/></svg>
<div class="a m" style="left:355px;top:761px;font-size:12px;line-height:16px;letter-spacing:-.2px">&lt;M1&gt; - Select first area corner</div>
<div class="a" style="left:1525px;top:753px;width:75px;height:32px;background:#3d7a70"></div>
<div class="a" style="left:1528px;top:754px;width:72px;height:31px;background:#55ceae"></div>
<div class="a" style="left:1532px;top:757px;width:68px;height:26px;background:#55ceae;border:1px solid;border-color:#bfeee0 #2f6a5a #2f6a5a #bfeee0"></div>
<div class="a m" style="left:1537px;top:761px;font-size:14px;line-height:16px;letter-spacing:.6px;font-weight:normal;-webkit-text-stroke:.3px #111">Inch</div>
<div class="a" style="left:1582px;top:767px;width:12px;height:6px;background:#9cdcdc;border:1px solid #2f6a5a;border-bottom-width:2px"></div>

<!-- status bar -->
<div class="a" style="left:0;top:790px;width:1600px;height:26px;background:#d4d0c8"></div>
<div class="a" style="left:4px;top:790px;width:1596px;height:26px;background:#000"></div>
<div class="a" style="left:7px;top:791px;width:1593px;height:23px;background:#b0ffff;border-bottom:2px solid #5e9a94;border-left:1px solid #5e9a94;border-right:1px solid #5e9a94"></div>
<div class="a m" style="left:667px;top:794px;font-size:12px;line-height:16px;letter-spacing:-.2px">DX=-0.0017242,DY=-0.0040355,D=0.0043884</div>
<div class="a" style="left:0;top:816px;width:1600px;height:2px;background:#6a6a64"></div>
<div class="a" style="left:0;top:818px;width:1600px;height:60px;background:#d4d0c8;border-top:1px solid #fff"></div>

<!-- white note box -->
<div class="a" style="left:888px;top:610px;width:305px;height:183px;background:#fff;border:3px solid #0000c8"></div>
<div class="a" style="left:888px;top:616px;width:305px;text-align:center;font:bold 20.5px/26px 'Noto Serif CJK SC',serif;color:#d0006a;white-space:nowrap">字符框请做出</div>

<!-- taskbar -->
<svg width="0" height="0" style="position:absolute"><defs><g id="xw"><rect width="15" height="15" fill="#fff" stroke="#667" stroke-width=".5"/><rect width="15" height="3" fill="#223a88"/><rect x="2" y="4" width="11" height="10" fill="#f4e89a"/><path d="M4 5l7 8M11 5l-7 8" stroke="#6a7a00" stroke-width="2"/></g>
<g id="doc"><rect x="2" width="11" height="15" fill="#eef" stroke="#556"/><path d="M4 4h7M4 7h7M4 10h7" stroke="#3060c0"/></g>
<g id="xl"><rect x="2" width="12" height="15" fill="#fff" stroke="#556"/><rect y="3" width="8" height="9" fill="#1c7a3c"/><path d="M2 5l4 5M6 5l-4 5" stroke="#fff"/></g>
<g id="wd"><rect x="2" width="12" height="15" fill="#fff" stroke="#556"/><rect y="3" width="8" height="9" fill="#2050c0"/><path d="M1 5l1 5 1-4 1 4 1-5" stroke="#fff" fill="none" stroke-width=".7"/></g></defs></svg>
<div class="a" style="left:2px;top:828px;width:47px;height:22px;background:#d4d0c8;border:1px solid;border-color:#fff #555 #555 #fff;font:12.500px/20px 'Noto Sans CJK SC',sans-serif;padding-left:19px;color:#111">开始</div>
<svg class="a" style="left:4px;top:831px" width="16" height="15"><path d="M1 2l6-1v6H1zM8 1l7-1v7H8z" fill="#e85020"/><path d="M8 1l7-1v7H8z" fill="#70b020"/><path d="M1 8h6v6l-6-1z" fill="#3080e0"/><path d="M8 8h7v7l-7-1z" fill="#f0b820"/></svg>
<div class="a" style="left:106px;top:822px;width:2px;height:56px;background:#fff;border-left:1px solid #909088"></div>
<svg class="a" style="left:122px;top:828px" width="20" height="22"><path d="M3 3h12l-5 7h-6zM4 11h7l-4 9h9l4-7" fill="#30c080"/><path d="M6 12h8l4 8H8z" fill="#3090e0"/></svg>
<svg class="a" style="left:158px;top:831px" width="17" height="17"><rect width="17" height="17" fill="#e01a1a"/><path d="M3 14q5-4 5-12 1 7 6 9-6-1-11 3z" fill="none" stroke="#fff"/></svg>
<div class="tk t1" style="left:185px;width:144px;padding-left:22px;font-size:13px"><svg width="15" height="16"><rect x="2" y="0" width="11" height="15" fill="#cfe0f0" stroke="#557"/><path d="M4 2h7v3H4zM4 7h2v2H4zM7 7h2v2H7zM10 7h2v2h-2zM4 10h2v2H4zM7 10h2v2H7zM10 10h2v2h-2z" fill="#6080b0"/></svg>计算器</div>
<svg class="a" style="left:339px;top:830px" width="18" height="18"><circle cx="9" cy="9" r="8" fill="#7ec850"/><text x="9" y="14" text-anchor="middle" font-size="14" font-weight="bold" fill="#fff">e</text></svg>
<div class="tk t1" style="left:366px;width:144px"><svg width="17" height="16"><rect width="16" height="16" fill="#1830b0"/><rect x="3" width="10" height="6" fill="#e0e0e0"/><rect x="2" y="8" width="12" height="8" fill="#e83030"/></svg>Total Commander 7.0...</div>
<div class="tk t1" style="left:513px;width:144px"><svg width="16" height="16"><use href="#wd"/></svg>2a9h20f4a0-阻抗设...</div>
<div class="tk t1" style="left:660px;width:143px"><svg width="16" height="16"><circle cx="8" cy="8" r="7" fill="#1a8a9a" stroke="#123"/><circle cx="8" cy="8" r="3" fill="#e8d030"/></svg>get.exe</div>
<div class="tk t1" style="left:805px;width:145px"><svg width="16" height="16"><use href="#xw"/></svg>Engineering Toolkit 9....</div>
<div class="tk t1" style="left:953px;width:142px"><svg width="16" height="16"><use href="#xw"/></svg>Progress</div>
<div class="tk t1" style="left:1097px;width:143px;background:#f0eeea;border-color:#555 #fff #fff #555;font-weight:bold"><svg width="16" height="16"><use href="#xw"/></svg>Graphic Editor 9.07...</div>
<div class="tk t1" style="left:1242px;width:145px"><svg width="16" height="16"><use href="#xw"/></svg>Dialog Box</div>

<svg class="a" style="left:66px;top:853px" width="20" height="19"><circle cx="6" cy="5" r="4" fill="#e87030"/><circle cx="14" cy="5" r="4" fill="#80c040"/><circle cx="6" cy="14" r="4" fill="#4090e0"/><circle cx="14" cy="14" r="4" fill="#e8c040"/></svg>
<div class="tk t2" style="left:116px;width:157px;font-size:12.5px"><svg width="16" height="16"><path d="M5 1h8q2 5-4 7l-2 7H3z" fill="#20a050"/></svg>工程系统  版本: 1.1...</div>
<div class="tk t2" style="left:275px;width:159px;font-size:12px"><svg width="16" height="16"><use href="#doc"/></svg>制作规范 (Ver:1.0.6)</div>
<div class="tk t2" style="left:436px;width:157px"><svg width="16" height="16"><use href="#xl"/></svg>2A9H20F4A0制作单.xls...</div>
<div class="tk t2" style="left:594px;width:156px"><svg width="16" height="16"><use href="#xl"/></svg>2A9H20F4A0-预审指示...</div>
<div class="tk t2" style="left:753px;width:157px;font-size:12.5px"><svg width="16" height="16"><path d="M8 0l2 5 6 1-4 4 1 6-5-3-5 3 1-6-4-4 6-1z" fill="#e09020" stroke="#c04010" stroke-width=".8"/></svg>兴森快捷衡阳分公司...</div>
<div class="tk t2" style="left:912px;width:156px;font-size:13px"><svg width="16" height="16"><rect width="15" height="15" rx="2" fill="#1870c0"/><path d="M4 12L6 3h6M5 7h5" stroke="#fff" stroke-width="2" fill="none"/></svg>王娟</div>
<div class="tk t2" style="left:1070px;width:158px"><svg width="16" height="16"><circle cx="8" cy="8" r="6" fill="#1a8a9a" stroke="#123"/><circle cx="8" cy="8" r="2.500" fill="#8ad040"/></svg>CAM_Guide v2.93</div>
<div class="tk t2" style="left:1230px;width:157px"><svg width="16" height="16"><rect x="2" y="1" width="12" height="14" fill="#cfe8f8" stroke="#557"/><path d="M2 2h12" stroke="#333" stroke-dasharray="1 1"/></svg>2a9h20f4a0.txt - 记事本</div>

<!-- tray -->
<div class="a" style="left:1400px;top:822px;width:2px;height:56px;background:#fff;border-left:1px solid #909088"></div>
<svg class="a" style="left:1407px;top:830px" width="17" height="18"><rect x="1" y="8" width="15" height="9" fill="#d8d8d0" stroke="#777"/><path d="M3 10h11M3 12h11M3 14h11" stroke="#888"/><path d="M8 8Q8 3 12 2" stroke="#777" fill="none"/></svg>
<svg class="a" style="left:1409px;top:851px" width="9" height="20"><rect x=".5" y=".5" width="5" height="5" fill="none" stroke="#222"/><rect x="2.500" y="2.500" width="5" height="5" fill="#d4d0c8" stroke="#222"/><path d="M1 15h6l-3 4z" fill="#222"/></svg>
<div class="a" style="left:1428px;top:828px;width:172px;height:50px;border:1px solid;border-color:#808078 transparent transparent #808078"></div>
<svg class="a" style="left:1435px;top:833px" width="9" height="12"><path d="M1 4l3-3 3 3M1 8l3-3 3 3" fill="none" stroke="#111"/></svg>
<svg class="a" style="left:1450px;top:831px" width="18" height="18"><circle cx="9" cy="9" r="8" fill="#a8d000" stroke="#566"/><path d="M9 4v10M4 9h10" stroke="#111" stroke-width="2.500"/></svg>
<svg class="a" style="left:1472px;top:831px" width="14" height="18"><rect x="2" y="5" width="10" height="12" fill="#f8f8f8" stroke="#555"/><path d="M5 1v4M9 1v4" stroke="#555" stroke-width="2"/></svg>
<svg class="a" style="left:1497px;top:831px" width="18" height="17"><path d="M2 16V12M6 16V9M10 16V6M14 16V2" stroke="#8a8a84" stroke-width="2.500"/></svg>
<div class="a" style="left:1537px;top:837px;font:12px/15px 'Liberation Sans';color:#111">20:30</div>
<div class="a" style="left:1533px;top:855px;font:13px/18px 'Noto Sans CJK SC',sans-serif;color:#111">星期三</div>
<svg class="a" style="left:1451px;top:854px" width="16" height="18"><path d="M14 3Q4 0 3 9T12 15L14 8H8" fill="none" stroke="#e02a1a" stroke-width="3.500"/></svg>
<svg class="a" style="left:1471px;top:854px" width="14" height="18"><path d="M2 6h3l4-4v14l-4-4H2z" fill="#d8d8d0" stroke="#777"/><path d="M11 6q2 3 0 6" stroke="#888" fill="none"/></svg>
<svg class="a" style="left:1490px;top:853px" width="16" height="18"><path d="M3 8L12 2 8 9z" fill="#2060e0"/><circle cx="8" cy="12" r="5" fill="#e83020"/><path d="M5 12h6" stroke="#fff" stroke-width="2"/></svg>
<svg class="a" style="left:1581px;top:855px" width="17" height="17"><rect width="17" height="14" fill="#2a68b0" stroke="#445"/><path d="M4 11h9" stroke="#c0d8f0"/></svg>

<!-- net widget -->
<div class="a" style="left:1450px;top:26px;width:105px;height:37px;border-radius:18px;background:linear-gradient(180deg,#fafafa,#dcdcdc);box-shadow:0 2px 4px rgba(0,0,0,.45)"></div>
<div class="a" style="left:1432px;top:20px;width:47px;height:46px;border-radius:50%;background:radial-gradient(ellipse at 50% 8%,#b8ecc8 0,#30a860 30%,#1a9a50 60%,#30c060 100%);border:2px solid #d8e8d8;box-shadow:0 1px 3px rgba(0,0,0,.5);font:14.500px/42px 'Liberation Sans',sans-serif;color:#d8f8d8;text-align:center">72%</div>
<div class="a" style="left:1482px;top:29px;font:bold 11px/12px 'Liberation Sans';color:#d03820">&#8593;</div>
<div class="a" style="left:1482px;top:45px;font:bold 11px/12px 'Liberation Sans';color:#20a040">&#8595;</div>
<div class="a" style="left:1497px;top:30px;width:32px;font:10px/12px 'Liberation Sans';color:#222;text-align:right;white-space:nowrap">27.1K/s</div>
<div class="a" style="left:1497px;top:45px;width:32px;font:10px/12px 'Liberation Sans';color:#222;text-align:right;white-space:nowrap">27K/s</div>
<div class="a" style="left:1534px;top:35px;width:19px;height:19px;border-radius:50%;background:#3a86e0;font:bold 18px/18px 'Liberation Sans';color:#fff;text-align:center">+</div>
<div class="a" style="left:1544px;top:34px;width:8px;height:8px;border-radius:50%;background:#e82020"></div>
</body></html>
